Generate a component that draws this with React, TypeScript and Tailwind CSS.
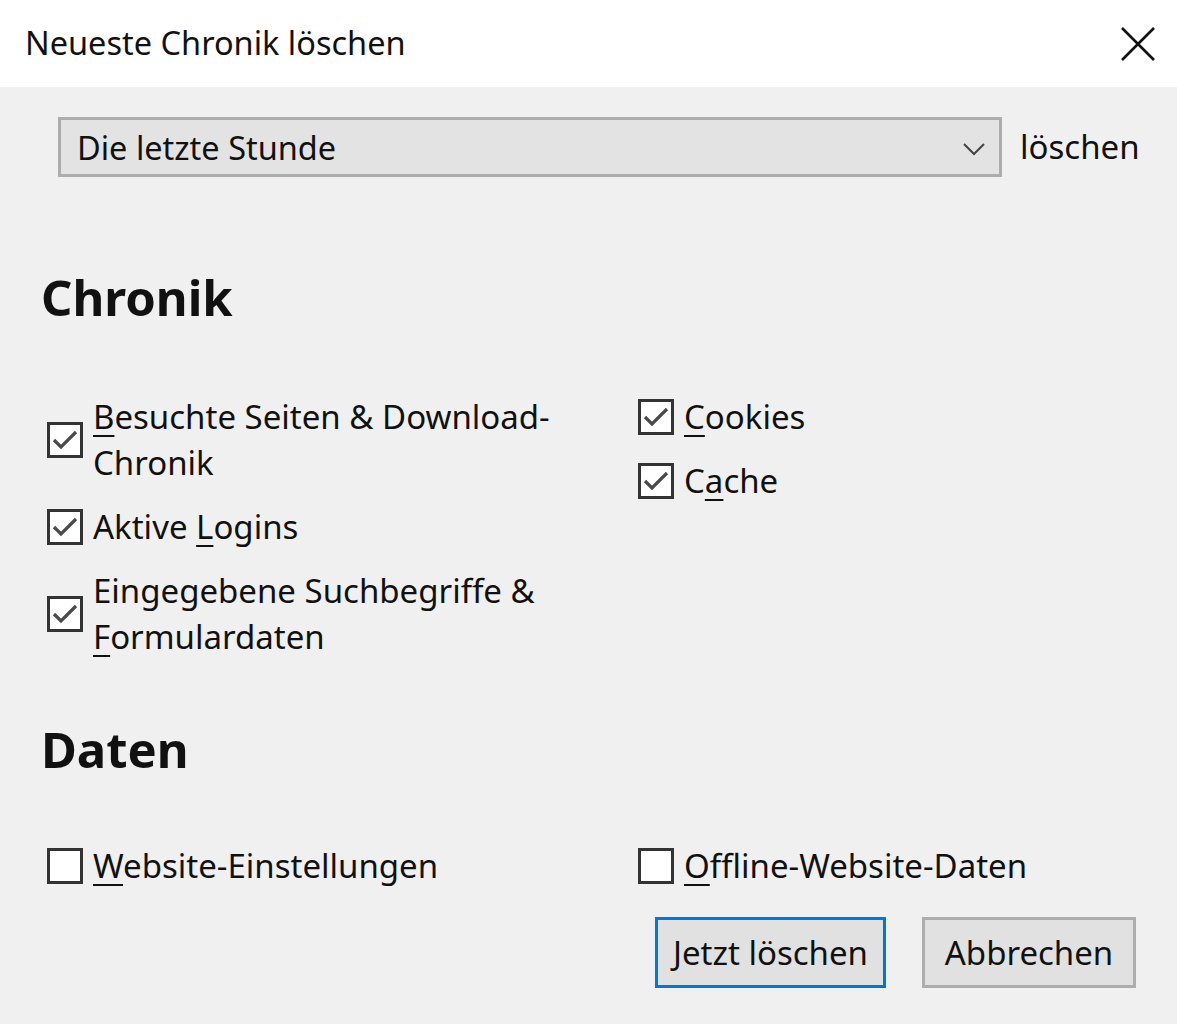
import React from 'react';

const font = { fontFamily: '"Segoe UI", "Noto Sans", "Open Sans", sans-serif' };

const Box: React.FC<{ checked?: boolean }> = ({ checked }) => (
  <div className="w-[36px] h-[36px] shrink-0 border-[3px] border-[#333333] bg-white flex items-center justify-center">
    {checked && (
      <svg width="28" height="24" viewBox="0 0 28 24" fill="none">
        <path d="M3 12 L10 19 L25 4" stroke="#4a4a4a" strokeWidth="3.2" />
      </svg>
    )}
  </div>
);

const U: React.FC<{ children: React.ReactNode }> = ({ children }) => (
  <span className="underline underline-offset-[6px] decoration-[2px]">{children}</span>
);

const Item: React.FC<{ checked?: boolean; children: React.ReactNode }> = ({ checked, children }) => (
  <div className="flex items-center gap-[10px]">
    <Box checked={checked} />
    <div className="text-[33px] leading-[46px] text-[#111]">{children}</div>
  </div>
);

const App: React.FC = () => {
  return (
    <div className="w-[1177px] h-[1024px] bg-[#f0f0f0] flex flex-col text-black" style={font}>
      <div className="h-[87px] bg-white flex items-center justify-between pl-[25px] pr-[20px]">
        <span className="text-[32.5px] text-[#111]">Neueste Chronik löschen</span>
        <svg width="38" height="38" viewBox="0 0 38 38">
          <path d="M3 3 L35 35 M35 3 L3 35" stroke="#111" strokeWidth="2.6" />
        </svg>
      </div>

      <div className="flex items-center mt-[30px] pl-[58px]">
        <div className="w-[944px] h-[60px] bg-[#e3e3e3] border-[3px] border-[#adadad] flex items-center justify-between pl-[16px] pr-[14px] pt-[3px]">
          <span className="text-[32.5px] text-[#111]">Die letzte Stunde</span>
          <svg width="22" height="14" viewBox="0 0 22 14" fill="none">
            <path d="M1 2 L11 12 L21 2" stroke="#444" strokeWidth="2" />
          </svg>
        </div>
        <span className="ml-[18px] text-[33px] text-[#111]">löschen</span>
      </div>

      <h2 className="mt-[89px] ml-[41px] text-[49px] font-bold leading-[62px] text-[#111]">Chronik</h2>

      <div className="mt-[66px] ml-[47px] grid grid-cols-[591px_1fr]">
        <div className="flex flex-col gap-[18px]">
          <Item checked>
            <U>B</U>esuchte Seiten &amp; Download-
            <br />
            Chronik
          </Item>
          <Item checked>
            Aktive <U>L</U>ogins
          </Item>
          <Item checked>
            Eingegebene Suchbegriffe &amp;
            <br />
            <U>F</U>ormulardaten
          </Item>
        </div>
        <div className="flex flex-col gap-[18px]">
          <Item checked>
            <U>C</U>ookies
          </Item>
          <Item checked>
            C<U>a</U>che
          </Item>
        </div>
      </div>

      <h2 className="mt-[58px] ml-[41px] text-[49px] font-bold leading-[62px] text-[#111]">Daten</h2>

      <div className="mt-[63px] ml-[47px] grid grid-cols-[591px_1fr]">
        <Item>
          <U>W</U>ebsite-Einstellungen
        </Item>
        <Item>
          <U>O</U>ffline-Website-Daten
        </Item>
      </div>

      <div className="mt-[28px] flex justify-end gap-[36px] pr-[41px]">
        <button className="w-[231px] h-[71px] bg-[#e1e1e1] border-[3px] border-[#0078d7] text-[33px] text-[#111]">
          Jetzt löschen
        </button>
        <button className="w-[214px] h-[71px] bg-[#e1e1e1] border-[3px] border-[#adadad] text-[33px] text-[#111]">
          Abbrechen
        </button>
      </div>
    </div>
  );
};

export default App;
